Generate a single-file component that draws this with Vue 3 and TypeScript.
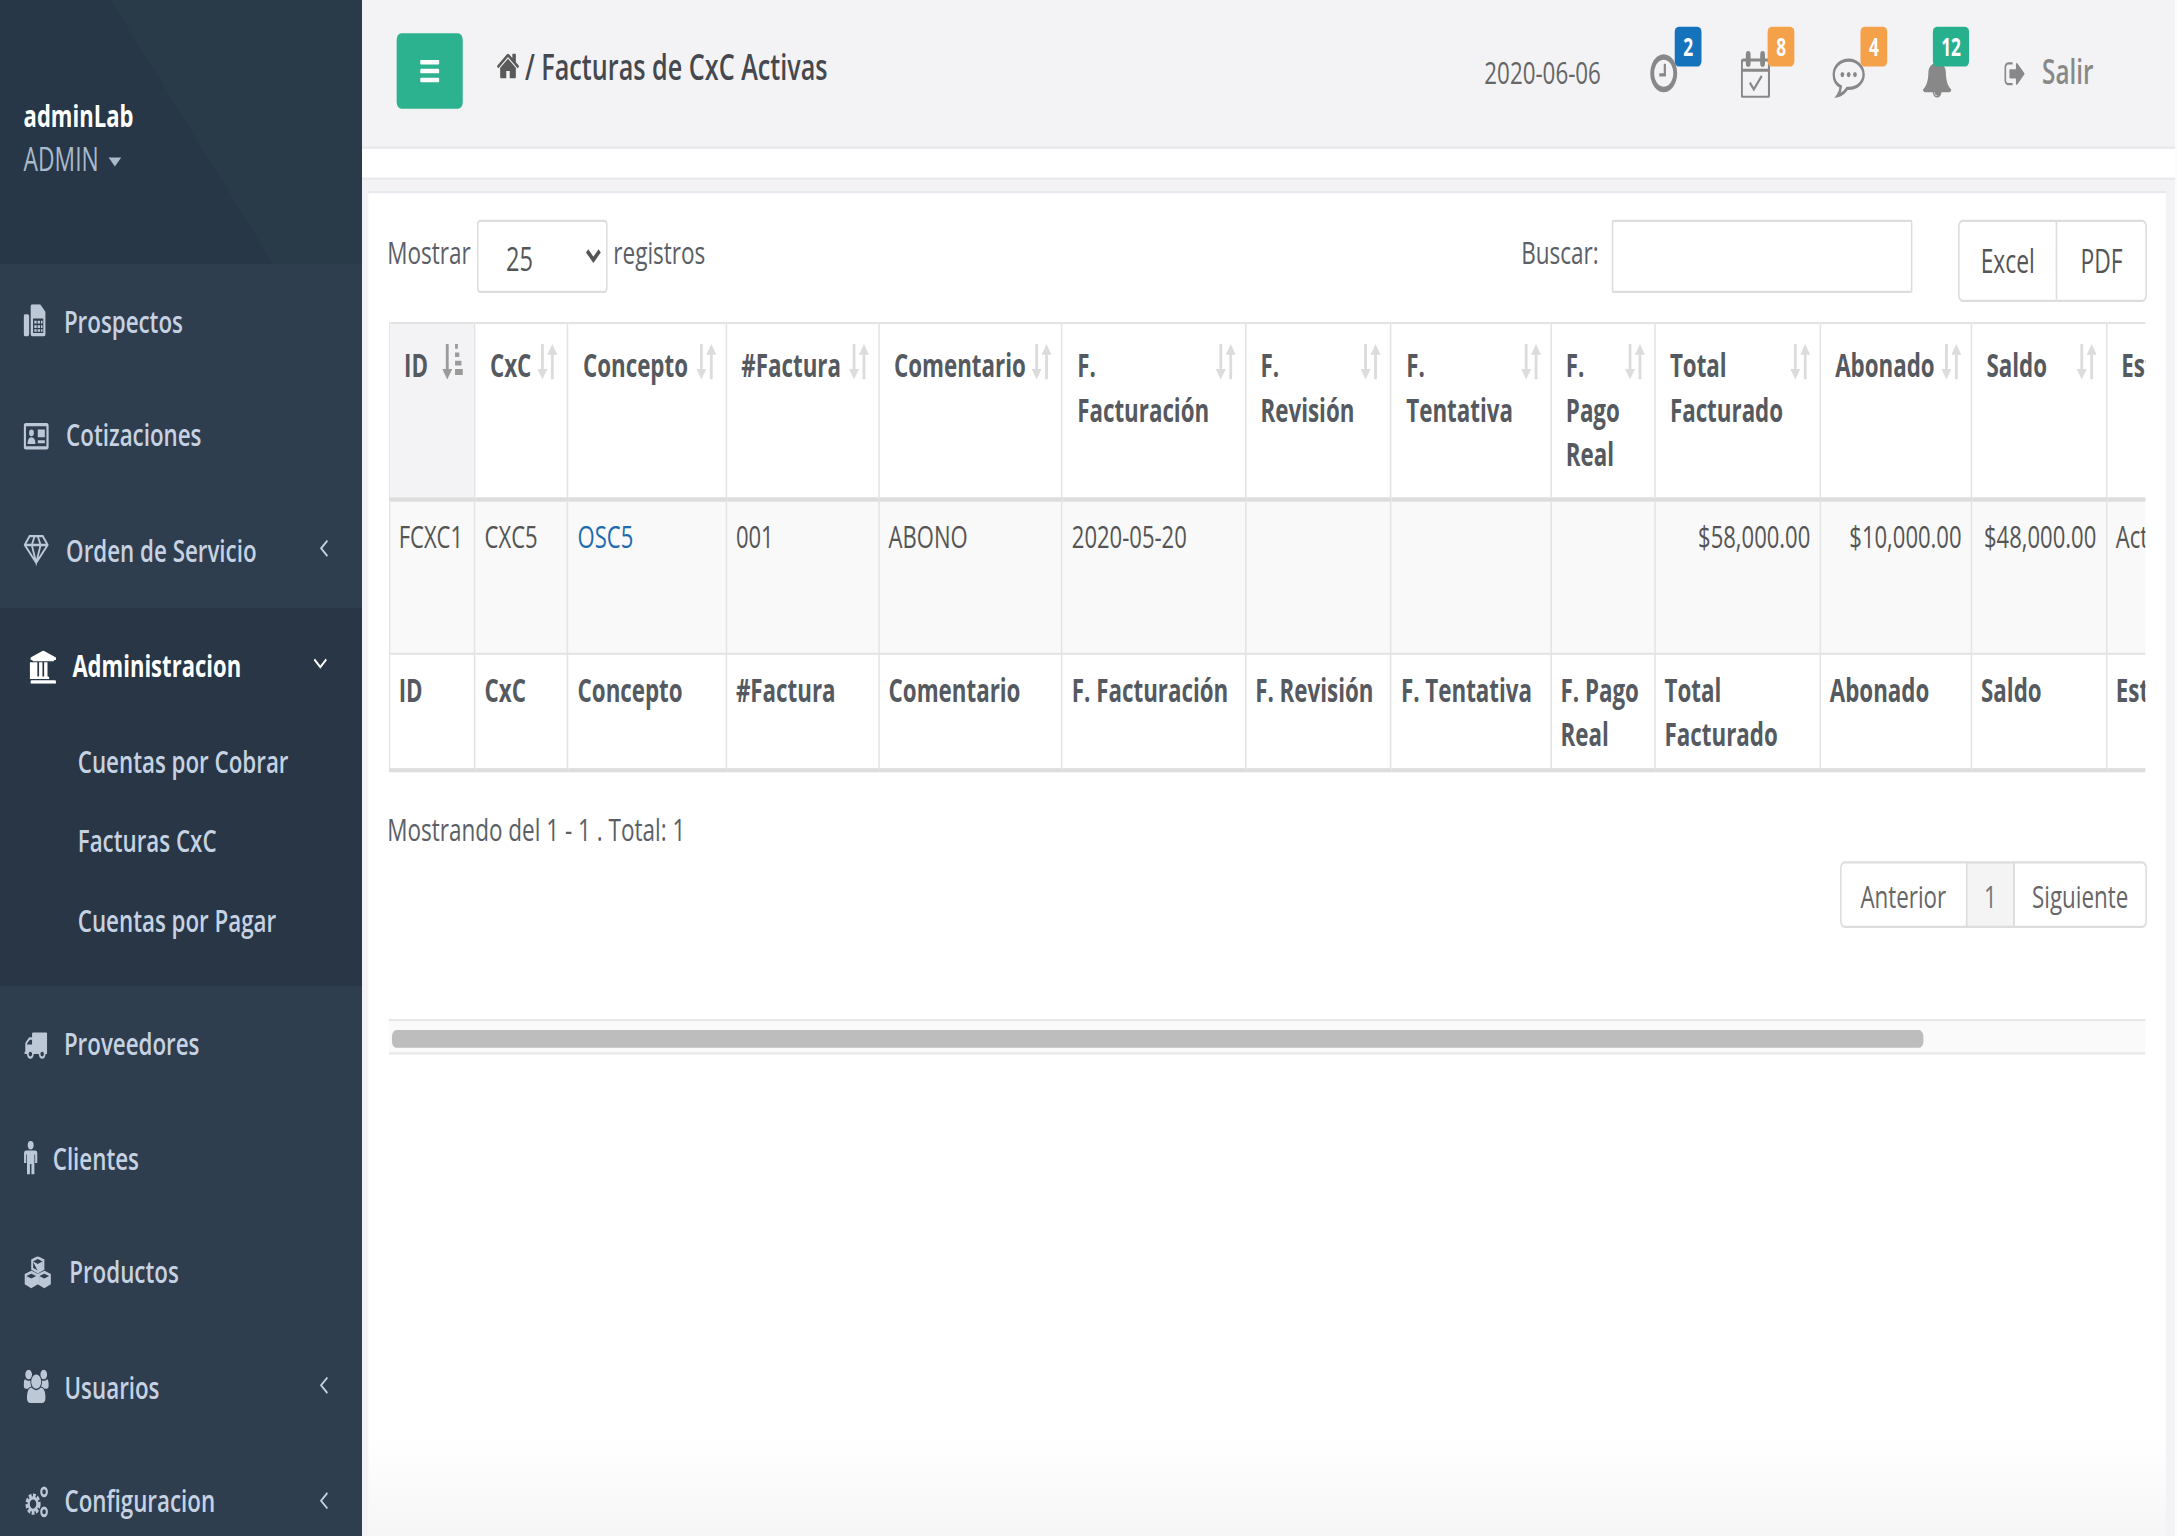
<script setup lang="ts">
const heads = [
  { t: 'ID', w: 54.6 }, { t: 'CxC', w: 59.1 }, { t: 'Concepto', w: 100.6 }, { t: '#Factura', w: 97 },
  { t: 'Comentario', w: 116.4 }, { t: 'F. Facturación', w: 116.5 }, { t: 'F. Revisión', w: 92.6 },
  { t: 'F. Tentativa', w: 101.4 }, { t: 'F. Pago Real', w: 66.1 }, { t: 'Total Facturado', w: 105 },
  { t: 'Abonado', w: 96.1 }, { t: 'Saldo', w: 85.6 }, { t: 'Estado', w: 60 },
]
const row = ['FCXC1', 'CXC5', 'OSC5', '001', 'ABONO', '2020-05-20', '', '', '', '$58,000.00', '$10,000.00', '$48,000.00', 'Activa']
</script>

<template>
  <div class="page">
    <aside class="side">
      <div class="profile">
        <div class="pname">adminLab</div>
        <div class="prole">ADMIN <span class="caret"></span></div>
      </div>
      <ul class="menu">
        <li class="item">
          <svg class="ic" style="width:14px" viewBox="0 0 14 15"><path d="M0 5.500q0-1 1-1h1.500q1 0 1 1v8q0 1-1 1H1q-1 0-1-1zM4.500 1q0-1 1-1h5l3.500 3.500v10q0 1-1 1H5.500q-1 0-1-1zM6 6.500h6.500V13H6z" fill-rule="evenodd"/><path d="M6.800 7.500h1.500v1.200H6.800zm2.100 0h1.500v1.200H8.900zm2.100 0h1v1.200h-1zM6.800 9.500h1.500v1.200H6.800zm2.100 0h1.500v1.200H8.900zm2.100 0h1v1.200h-1zM6.800 11.300h1.500v1.100H6.800zm2.100 0h1.500v1.100H8.900zm2.100 0h1v1.100h-1z"/></svg>
          <span class="lbl" style="margin-left:11.600px">Prospectos</span>
        </li>
        <li class="item">
          <svg class="ic" style="width:16px" viewBox="0 0 16 14"><path fill-rule="evenodd" d="M1.500 1h13q1.500 0 1.500 1.500v9q0 1.500-1.500 1.500h-13Q0 13 0 11.500v-9Q0 1 1.500 1zm0 1.500v9h13v-9z"/><circle cx="5" cy="5.500" r="1.500"/><path d="M2.500 10.500q0-3 2.500-3t2.500 3zM9 4h4.500v3.500H9zM9 8.800h4.500v1.400H9z"/></svg>
          <span class="lbl" style="margin-left:11px">Cotizaciones</span>
        </li>
        <li class="item">
          <svg class="ic" style="width:16px" viewBox="0 0 16 15"><path d="M3.800 1.500h8.400L15.300 5.500 8 13.500.7 5.500zM.7 5.500h14.600M5.200 5.500 8 13.500l2.800-8L9 1.500M5.200 5.500 7 1.500" fill="none" stroke="currentColor" stroke-width="1.100"/></svg>
          <span class="lbl" style="margin-left:11px">Orden de Servicio</span>
          <svg class="chev" viewBox="0 0 6 8"><path d="M5 .5 1 4l4 3.500" fill="none" stroke="currentColor" stroke-width="1"/></svg>
        </li>
        <li class="open">
          <div class="item active">
            <svg class="ic" style="width:17px;margin-left:3.500px" viewBox="0 0 1920 1792"><path d="M960 0l960 384v128h-128q0 26-20.500 45t-48.500 19h-1526q-28 0-48.500-19t-20.500-45h-128v-128zm-704 640h256v768h128v-768h256v768h128v-768h256v768h59q28 0 48.500 19t20.500 45v64h-1664v-64q0-26 20.500-45t48.500-19h59v-768zm1595 960q28 0 48.500 19t20.500 45v128h-1920v-128q0-26 20.500-45t48.500-19h1782z"/></svg>
            <span class="lbl" style="margin-left:10.500px">Administracion</span>
            <svg class="chev down" viewBox="0 0 9 6"><path d="M.7 1 4.500 4.500 8.300 1" fill="none" stroke="currentColor" stroke-width="1.100"/></svg>
          </div>
          <ul class="sub">
            <li>Cuentas por Cobrar</li>
            <li>Facturas CxC</li>
            <li>Cuentas por Pagar</li>
          </ul>
        </li>
        <li class="item">
          <svg class="ic" style="width:15px" viewBox="0 0 1792 1792"><path d="M640 1408q0-52-38-90t-90-38-90 38-38 90 38 90 90 38 90-38 38-90zm-384-512h384v-256h-158q-13 0-22 9l-195 195q-9 9-9 22v30zm1280 512q0-52-38-90t-90-38-90 38-38 90 38 90 90 38 90-38 38-90zm256-1088v1024q0 15-4 26.500t-13.500 18.500-16.500 11.500-23.500 6-22.500 2-25.500 0-22.500-.5q0 106-75 181t-181 75-181-75-75-181h-384q0 106-75 181t-181 75-181-75-75-181h-64q-3 0-22.500.5t-25.500 0-22.500-2-23.500-6-16.500-11.500-13.500-18.500-4-26.500q0-26 19-45t45-19v-320q0-8-.5-35t0-38 2.500-34.500 6.500-37 14-30.500 22.500-30l198-198q19-19 50.500-32t58.500-13h160v-192q0-26 19-45t45-19h1024q26 0 45 19t19 45z"/></svg>
          <span class="lbl" style="margin-left:10.600px">Proveedores</span>
        </li>
        <li class="item">
          <svg class="ic" style="width:9px" viewBox="0 0 9 16"><circle cx="4.500" cy="2" r="2"/><path d="M1.500 4.500h6Q9 4.500 9 6v4.500H7.500V6.500H7V16H5V11H4v5H2V6.500h-.5v4H0V6q0-1.500 1.500-1.500z"/></svg>
          <span class="lbl" style="margin-left:9.500px">Clientes</span>
        </li>
        <li class="item">
          <svg class="ic" style="width:18px" viewBox="0 0 18 16"><path d="M9 .5l3.800 1.400v4L9 7.400 5.200 5.900v-4zM4.600 7.500l3.800 1.400v4l-3.800 1.600L.8 12.900v-4zM13.400 7.500l3.800 1.400v4l-3.800 1.600-3.800-1.600v-4z" fill="none" stroke="currentColor" stroke-width="1.300"/><path d="M5.600 2.300 9 3.600l3.400-1.300v3.400L9 7zM1.200 9.300l3.400 1.300L8 9.300v3.400l-3.400 1.300-3.400-1.300zM10 9.300l3.400 1.300 3.400-1.300v3.400l-3.400 1.300L10 12.700z"/></svg>
          <span class="lbl" style="margin-left:11px">Productos</span>
        </li>
        <li class="item">
          <svg class="ic" style="width:16px" viewBox="0 0 1920 1792"><path d="M593 896q-162 5-265 128h-134q-82 0-138-40.500t-56-118.500q0-353 124-353 6 0 43.500 21t97.500 42.500 119 21.500q67 0 133-23-5 37-5 66 0 139 81 256zm1071 637q0 120-73 189.500t-194 69.500h-874q-121 0-194-69.500t-73-189.500q0-53 3.500-103.500t14-109 26.500-108.500 43-97.500 62-81 85.500-53.500 111.500-20q10 0 43 21.500t73 48 107 48 135 21.500 135-21.500 107-48 73-48 43-21.500q61 0 111.500 20t85.500 53.500 62 81 43 97.500 26.500 108.500 14 109 3.500 103.500zm-1024-1277q0 106-75 181t-181 75-181-75-75-181 75-181 181-75 181 75 75 181zm704 384q0 159-112.500 271.500t-271.500 112.500-271.500-112.500-112.500-271.500 112.500-271.500 271.500-112.500 271.500 112.500 112.500 271.500zm576 225q0 78-56 118.500t-138 40.500h-134q-103-123-265-128 81-117 81-256 0-29-5-66 66 23 133 23 59 0 119-21.500t97.500-42.500 43.500-21q124 0 124 353zm-128-609q0 106-75 181t-181 75-181-75-75-181 75-181 181-75 181 75 75 181z"/></svg>
          <span class="lbl" style="margin-left:10px">Usuarios</span>
          <svg class="chev" viewBox="0 0 6 8"><path d="M5 .5 1 4l4 3.500" fill="none" stroke="currentColor" stroke-width="1"/></svg>
        </li>
        <li class="item">
          <svg class="ic" style="width:16px" viewBox="0 0 16 15"><circle cx="6" cy="8.500" r="3.600" fill="none" stroke="currentColor" stroke-width="2.400" stroke-dasharray="1.600 .8"/><circle cx="6" cy="8.500" r="2.800" fill="none" stroke="currentColor" stroke-width="1.400"/><circle cx="13" cy="3" r="1.800" fill="none" stroke="currentColor" stroke-width="1.300"/><circle cx="13" cy="12" r="1.800" fill="none" stroke="currentColor" stroke-width="1.300"/></svg>
          <span class="lbl" style="margin-left:10px">Configuracion</span>
          <svg class="chev" viewBox="0 0 6 8"><path d="M5 .5 1 4l4 3.500" fill="none" stroke="currentColor" stroke-width="1"/></svg>
        </li>
      </ul>
    </aside>

    <main class="main">
      <header class="top">
        <button class="toggle" type="button" aria-label="menu">
          <svg viewBox="0 0 1792 1792"><path d="M1664 1344v128q0 26-19 45t-45 19h-1408q-26 0-45-19t-19-45v-128q0-26 19-45t45-19h1408q26 0 45 19t19 45zm0-512v128q0 26-19 45t-45 19h-1408q-26 0-45-19t-19-45v-128q0-26 19-45t45-19h1408q26 0 45 19t19 45zm0-512v128q0 26-19 45t-45 19h-1408q-26 0-45-19t-19-45v-128q0-26 19-45t45-19h1408q26 0 45 19t19 45z"/></svg>
        </button>
        <div class="crumb">
          <svg viewBox="0 0 1792 1792"><path d="M1472 992v480q0 26-19 45t-45 19h-384v-384h-256v384h-384q-26 0-45-19t-19-45v-480q0-1 .5-3t.5-3l575-474 575 474q1 2 1 6zm223-69l-62 74q-8 9-21 11h-3q-13 0-21-7l-692-577-692 577q-12 8-24 7-13-2-21-11l-62-74q-8-10-7-23.500t11-21.500l719-599q32-26 76-26t76 26l244 204v-195q0-14 9-23t23-9h192q14 0 23 9t9 23v408l219 182q10 8 11 21.500t-7 23.500z"/></svg>
          <span>/ Facturas de CxC Activas</span>
        </div>
        <div class="tools">
          <span class="date">2020-06-06</span>
          <div class="nav-btn">
            <svg class="clock" viewBox="0 0 1792 1792"><path d="M1024 544v448q0 14-9 23t-23 9h-320q-14 0-23-9t-9-23v-64q0-14 9-23t23-9h224v-352q0-14 9-23t23-9h64q14 0 23 9t9 23zm416 352q0-148-73-273t-198-198-273-73-273 73-198 198-73 273 73 273 198 198 273 73 273-73 198-198 73-273zm224 0q0 209-103 385.500t-279.500 279.500-385.500 103-385.500-103-279.500-279.500-103-385.500 103-385.500 279.500-279.500 385.500-103 385.500 103 279.500 279.500 103 385.500z"/></svg>
            <span class="badge blue" style="left:15.500px">2</span>
          </div>
          <div class="nav-btn">
            <svg class="cal" viewBox="0 0 18 21"><path d="M1.500 4h15q1 0 1 1v14.500q0 1-1 1h-15q-1 0-1-1V5q0-1 1-1zM.5 8.500h17" fill="none" stroke="currentColor" stroke-width="1.300"/><path d="M3 1.500q0-1.500 1.500-1.500T6 1.500v4Q6 7 4.500 7T3 5.500zM12 1.500q0-1.500 1.500-1.500T15 1.500v4Q15 7 13.500 7T12 5.500z"/><path d="M5.500 14l2.500 3 5-6" fill="none" stroke="currentColor" stroke-width="1.300"/></svg>
            <span class="badge orange" style="left:17px">8</span>
          </div>
          <div class="nav-btn">
            <svg class="cmt" viewBox="0 0 21 18"><path d="M10.500 1C5 1 1 4 1 7.500c0 2.500 1.800 4.500 4.500 5.500-.2 1.500-1 3-2 4 2.500-.5 4.500-1.500 6-3.300.3 0 .7 0 1 0 5.500 0 9.500-2.800 9.500-6.200S16 1 10.500 1z" fill="none" stroke="currentColor" stroke-width="1.500"/><circle cx="6.500" cy="7.500" r="1.200"/><circle cx="10.500" cy="7.500" r="1.200"/><circle cx="14.500" cy="7.500" r="1.200"/></svg>
            <span class="badge orange" style="left:18.500px">4</span>
          </div>
          <div class="nav-btn bell-btn">
            <svg class="bell" viewBox="0 0 1792 1792" preserveAspectRatio="none"><path d="M912 1696q0-16-16-16-59 0-101.500-42.500t-42.500-101.500q0-16-16-16t-16 16q0 73 51.500 124.500t124.500 51.500q16 0 16-16zm816-288q0 52-38 90t-90 38h-448q0 106-75 181t-181 75-181-75-75-181h-448q-52 0-90-38t-38-90q50-42 91-88t85-119.500 74.500-158.500 50-206 19.500-260q0-152 117-282.500t307-158.500q-8-19-8-39 0-40 28-68t68-28 68 28 28 68q0 20-8 39 190 28 307 158.500t117 282.500q0 139 19.500 260t50 206 74.500 158.500 85 119.500 91 88z"/></svg>
            <span class="badge green" style="left:7px;width:23px">12</span>
          </div>
          <svg class="out" viewBox="0 0 1792 1792"><path d="M704 1440q0 4 1 20t.5 26.500-3 23.500-10 19.500-20.500 6.500h-320q-119 0-203.500-84.500t-84.500-203.500v-704q0-119 84.500-203.500t203.500-84.500h320q13 0 22.500 9.500t9.500 22.500q0 4 1 20t.5 26.500-3 23.500-10 19.500-20.500 6.500h-320q-66 0-113 47t-47 113v704q0 66 47 113t113 47h312l11.500 1 11.500 3 8 5.500 7 9 2 13.500zm928-544q0 26-19 45l-544 544q-19 19-45 19t-45-19-19-45v-288h-448q-26 0-45-19t-19-45v-384q0-26 19-45t45-19h448v-288q0-26 19-45t45-19 45 19l544 544q19 19 19 45z"/></svg>
          <span class="salir">Salir</span>
        </div>
      </header>
      <div class="strip"></div>

      <section class="panel">
        <div class="toolbar">
          <label class="len">Mostrar
            <select class="sel"><option>25</option></select>
            registros</label>
          <label class="search">Buscar: <input class="inp" type="text" /></label>
          <div class="export"><span class="ex" style="width:61.700px">Excel</span><span class="ex" style="width:56.500px">PDF</span></div>
        </div>

        <div class="table-wrap">
          <table class="tb">
            <colgroup><col v-for="h in heads" :key="h.t" :style="{ width: h.w + 'px' }" /></colgroup>
            <thead>
              <tr>
                <th v-for="(h, i) in heads" :key="h.t" :class="{ sorted: i === 0 }">
                  {{ h.t }}
                  <svg v-if="i === 0" class="sort on" viewBox="0 0 15 15" preserveAspectRatio="none"><path d="M2.500 0h2v10.500H7L3.500 15 0 10.500h2.500z"/><path d="M9 0h2v2H9zM9 3.500h3v2H9zM9 7h4.500v2H9zM9 10.500h6v2.500H9z"/></svg>
                  <svg v-else class="sort" viewBox="0 0 15 15" preserveAspectRatio="none"><path d="M3 0h2v10.500h2.500L4 15 .5 10.500H3zM10 15h2V4.500h2.500L11 0 7.500 4.500H10z"/></svg>
                </th>
              </tr>
            </thead>
            <tbody>
              <tr>
                <td v-for="(c, i) in row" :key="i" :class="{ num: i >= 9 && i <= 11 }">
                  <a v-if="i === 2" class="link">{{ c }}</a><template v-else>{{ c }}</template>
                </td>
              </tr>
            </tbody>
            <tfoot>
              <tr><th v-for="h in heads" :key="h.t">{{ h.t }}</th></tr>
            </tfoot>
          </table>
        </div>

        <div class="info">Mostrando del 1 - 1 . Total: 1</div>
        <div class="pager">
          <span class="pg" style="width:81px">Anterior</span>
          <span class="pg cur">1</span>
          <span class="pg" style="width:84.700px">Siguiente</span>
        </div>

        <div class="track"><div class="thumb"></div></div>
      </section>
    </main>
  </div>
</template>

<style scoped>
.page {
  width: 1383px;
  height: 692px;
  display: flex;
  overflow: hidden;
  transform: scale(1.574, 2.22);
  transform-origin: 0 0;
  font-family: "Open Sans", "Liberation Sans", sans-serif;
  font-size: 14px;
  line-height: 20px;
  color: #5a6066;
  background: #ededef;
}
.side {
  width: 230px;
  flex: none;
  background: #2f3e4f;
  color: #c6d2e2;
}
.profile {
  height: 119px;
  padding: 42.200px 0 0 15px;
  box-sizing: border-box;
  background: linear-gradient(49deg, #273747 0 52%, #293a49 52.300%);
}
.pname { color: #fff; font-weight: 700; font-size: 14px; line-height: 20px; }
.prole { color: #a9bacb; font-size: 14.500px; line-height: 20px; }
.caret {
  display: inline-block;
  width: 0;
  height: 0;
  border-left: 4px solid transparent;
  border-right: 4px solid transparent;
  border-top: 4px solid #a9bacb;
  vertical-align: middle;
  margin-left: 2.500px;
}
.menu, .sub { list-style: none; margin: 0; padding: 0; }
.item {
  height: 51.500px;
  display: flex;
  align-items: center;
  padding-left: 15px;
  position: relative;
  font-size: 14.200px;
  font-weight: 600;
}
.ic { height: 15px; flex: none; fill: #bcc8d6; color: #bcc8d6; }
.chev { position: absolute; left: 202.500px; top: 21px; width: 6px; height: 8px; color: #c6d2e2; }
.chev.down { left: 199px; width: 9px; height: 6px; top: 22px; color: #fff; }
.open { background: #283645; padding: .8px 0 10.500px; }
.open + .item { margin-top: 1.100px; }
.active { color: #fff; font-size: 14px; font-weight: 700; }
.active .ic { fill: #fff; }
.sub { margin-top: -.8px; }
.sub li { height: 36px; line-height: 36px; padding-left: 49.400px; font-size: 14.200px; font-weight: 600; }
.main { width: 1153px; flex: none; box-sizing: border-box; background: #f3f3f5; border-right: 1.300px solid #fff; }
.top {
  height: 67px;
  box-sizing: border-box;
  display: flex;
  align-items: flex-start;
  border-bottom: 1px solid #e6e8eb;
  position: relative;
}
.toggle {
  width: 42px;
  height: 34px;
  margin: 14.500px 0 0 22px;
  padding: 0;
  border: 0;
  border-radius: 3px;
  background: #2cb28e;
  display: flex;
  align-items: center;
  justify-content: center;
}
.toggle svg { width: 14px; height: 14px; fill: #fff; }
.crumb {
  display: flex;
  align-items: center;
  margin: 20px 0 0 21px;
  font-size: 16px;
  font-weight: 600;
  color: #45494f;
}
.crumb svg { width: 15.500px; height: 15.500px; fill: #5a5a5a; margin-right: 3px; }
.tools {
  margin-left: auto;
  padding-right: 52px;
  display: flex;
  align-items: flex-start;
  color: #888;
}
.date { margin: 22.500px 31.500px 0 0; color: #666; font-size: 14.200px; }
.nav-btn { position: relative; width: 57.500px; height: 60px; fill: #888; }
.bell-btn { width: 52px; }
.clock { width: 20px; height: 20px; margin: 23px 0 0 -1.500px; display: block; }
.cal { width: 18.500px; height: 21.300px; margin-top: 22.500px; display: block; }
.cmt { width: 21px; height: 18.200px; margin-top: 25.600px; display: block; }
.bell { width: 19.400px; height: 17px; margin-top: 27px; display: block; }
.out { width: 14.500px; height: 14.500px; margin: 25.500px 0 0 -.5px; fill: #888; flex: none; }
.salir { margin: 22.500px 0 0 10.300px; color: #888; font-size: 15.400px; font-weight: 600; }
.badge {
  position: absolute;
  top: 12.200px;
  width: 17px;
  height: 17.500px;
  border-radius: 2.500px;
  color: #fff;
  font-size: 11px;
  font-weight: 700;
  line-height: 17.500px;
  text-align: center;
}
.blue { background: #1573bb; }
.orange { background: #f5a14a; }
.green { background: #27b08e; }
.strip { height: 12.500px; background: #fff; border-bottom: 1px solid #e6e8eb; }
.panel {
  height: 610px;
  margin: 5.900px 5.700px 0 3.700px;
  padding: 11.600px 12.400px 0 12.300px;
  box-sizing: border-box;
  border-top: 1.500px solid #e6e9ed;
  background: linear-gradient(#fff 0 92%, #f5f5f6 100%);
}
.toolbar { display: flex; align-items: flex-start; height: 45.900px; font-size: 14.300px; }
.len { display: flex; align-items: flex-start; line-height: 30px; }
.sel {
  width: 82.700px;
  height: 33.300px;
  margin: 0 3.500px 0 4.500px;
  padding-left: 13px;
  border: 1px solid #ddd;
  border-radius: 2px;
  background: #fff;
  font: 15px "Open Sans", sans-serif;
  color: #555;
}
.search { margin-left: auto; display: flex; align-items: flex-start; line-height: 30px; }
.inp {
  width: 191.600px;
  height: 33.300px;
  box-sizing: border-box;
  margin-left: 8px;
  border: 1px solid #ddd;
  border-radius: 1px;
  background: #fff;
}
.export {
  margin-left: 28.500px;
  display: flex;
  height: 37.400px;
  box-sizing: border-box;
  border: 1px solid #ddd;
  border-radius: 3px;
}
.ex { display: block; box-sizing: border-box; text-align: center; line-height: 36px; color: #555; font-size: 14.500px; }
.ex + .ex { border-left: 1px solid #ddd; }
.table-wrap { width: 1116px; margin-left: .6px; overflow: hidden; }
.tb {
  width: 1151px;
  table-layout: fixed;
  border-collapse: collapse;
  border-top: 1px solid #e3e3e3;
}
.tb th, .tb td { border-left: 1px solid #e4e4e4; border-right: 1px solid #e4e4e4; vertical-align: top; text-align: left; }
.tb th { font-weight: 700; font-size: 14.200px; color: #555960; overflow: hidden; }
thead th { height: 79.500px; box-sizing: border-box; padding: 9.500px 17px 8px 9.100px; border-bottom: 2px solid #ddd; position: relative; }
thead th.sorted { background: #f3f3f5; }
.tb td { height: 69.600px; box-sizing: border-box; padding: 6.500px 5.700px; background: #f9f9f9; border-bottom: 1px solid #e4e4e4; white-space: nowrap; color: #555; }
.tb td.num { text-align: right; }
.link { color: #1c6bb0; }
tfoot th { height: 53px; box-sizing: border-box; padding: 6.400px 5.700px 3px; border-bottom: 2px solid #ddd; }
.sort { position: absolute; top: 9px; right: 5.500px; width: 13.500px; height: 16px; fill: #dcdcdc; }
.sort.on { fill: #9a9a9a; right: 7px; }
.info { margin-top: 16px; height: 20.700px; line-height: 20px; font-size: 14.300px; }
.pager { display: flex; justify-content: flex-end; height: 30.700px; margin-top: 2.400px; font-size: 14.200px; }
.pg {
  box-sizing: border-box;
  text-align: center;
  line-height: 29px;
  border: 1px solid #ddd;
  margin-left: -1px;
  color: #666;
}
.pg:first-child { border-radius: 3px 0 0 3px; }
.pg:last-child { border-radius: 0 3px 3px 0; }
.cur { width: 31.500px; background: #f4f4f4; color: #777; }
.track {
  margin: 41px 0 0 .6px;
  height: 16px;
  box-sizing: border-box;
  padding: 4px 0 0 2.500px;
  background: #fafafa;
  border-top: 1px solid #e8e8e8;
  border-bottom: 1px solid #e8e8e8;
  width: 1116px;
}
.thumb { width: 973px; height: 8px; border-radius: 3px; background: #bdbdbd; }
</style>
<style>
html, body { height: 1536px; }
html { overflow: hidden; background: #f3f3f5; }
body { margin: 0; }
</style>
